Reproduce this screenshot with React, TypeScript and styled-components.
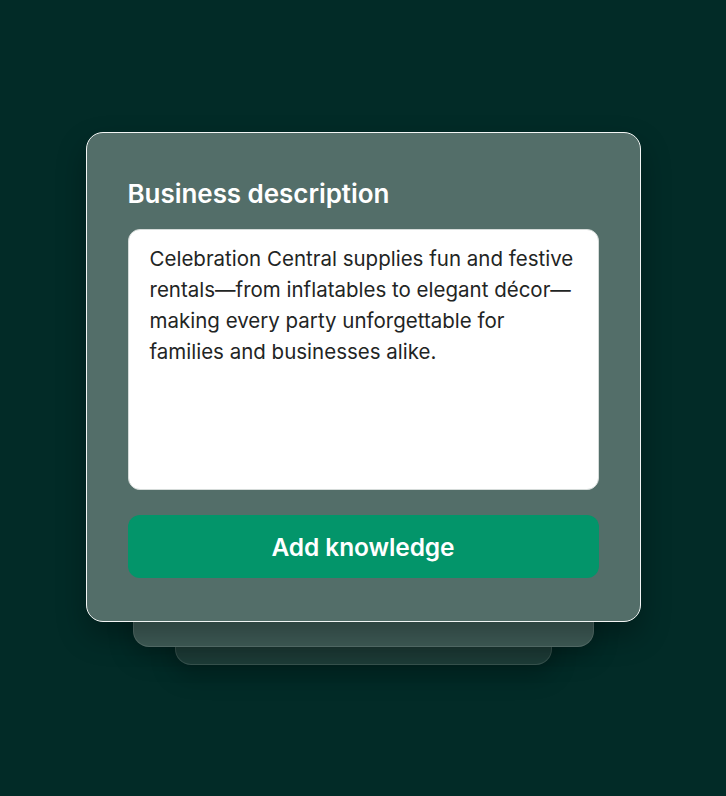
import React from "react";
import styled, { createGlobalStyle } from "styled-components";

const Global = createGlobalStyle`
  html, body { margin: 0; padding: 0; background: #022b27; }
  body { font-family: Inter, "Noto Sans", sans-serif; -webkit-font-smoothing: antialiased; }
`;

const Page = styled.div`
  width: 726px;
  height: 796px;
  display: flex;
  justify-content: center;
  padding-top: 132px;
  box-sizing: border-box;
  background: #022b27;
`;

const Stack = styled.div`
  position: relative;
  width: 555px;
  height: 490px;
`;

const Layer = styled.div<{ $inset: number; $drop: number; $bg: string }>`
  position: absolute;
  left: ${(p) => p.$inset}px;
  right: ${(p) => p.$inset}px;
  bottom: ${(p) => -p.$drop}px;
  height: 80px;
  border-radius: 16px;
  background: ${(p) => p.$bg};
  border: 1px solid rgba(255, 255, 255, 0.12);
  box-shadow: 0 10px 24px rgba(0, 0, 0, 0.25);
`;

const Card = styled.div`
  position: relative;
  box-sizing: border-box;
  height: 100%;
  border-radius: 17px;
  border: 1.5px solid #f2f5f4;
  background: #536e69;
  padding: 45px 41px 41px 41px;
  display: flex;
  flex-direction: column;
  box-shadow: 0 14px 30px rgba(0, 0, 0, 0.3);
`;

const Title = styled.h2`
  margin: 0 0 19px 0;
  font-size: 26px;
  line-height: 32px;
  font-weight: 600;
  color: #ffffff;
  letter-spacing: -0.05px;
`;

const TextBox = styled.div`
  box-sizing: border-box;
  height: 261px;
  background: #ffffff;
  border: 1.5px solid #d5dbd9;
  border-radius: 12px;
  padding: 13px 18px 10px 21px;
  font-size: 20.5px;
  line-height: 31px;
  color: #1f2524;
`;

const Button = styled.button`
  margin-top: 25px;
  height: 63px;
  border: none;
  border-radius: 12px;
  background: #03956a;
  color: #ffffff;
  font-family: Inter, "Noto Sans", sans-serif;
  font-size: 24.5px;
  font-weight: 600;
  letter-spacing: -0.1px;
  cursor: pointer;
`;

export default function App() {
  return (
    <>
      <Global />
      <Page>
        <Stack>
          <Layer $inset={89} $drop={43} $bg="#1f403b" />
          <Layer $inset={47} $drop={25} $bg="#3f5c57" />
          <Card>
            <Title>Business description</Title>
            <TextBox>
              Celebration Central supplies fun and festive rentals—from inflatables to elegant décor—making every party unforgettable for families and businesses alike.
            </TextBox>
            <Button>Add knowledge</Button>
          </Card>
        </Stack>
      </Page>
    </>
  );
}
